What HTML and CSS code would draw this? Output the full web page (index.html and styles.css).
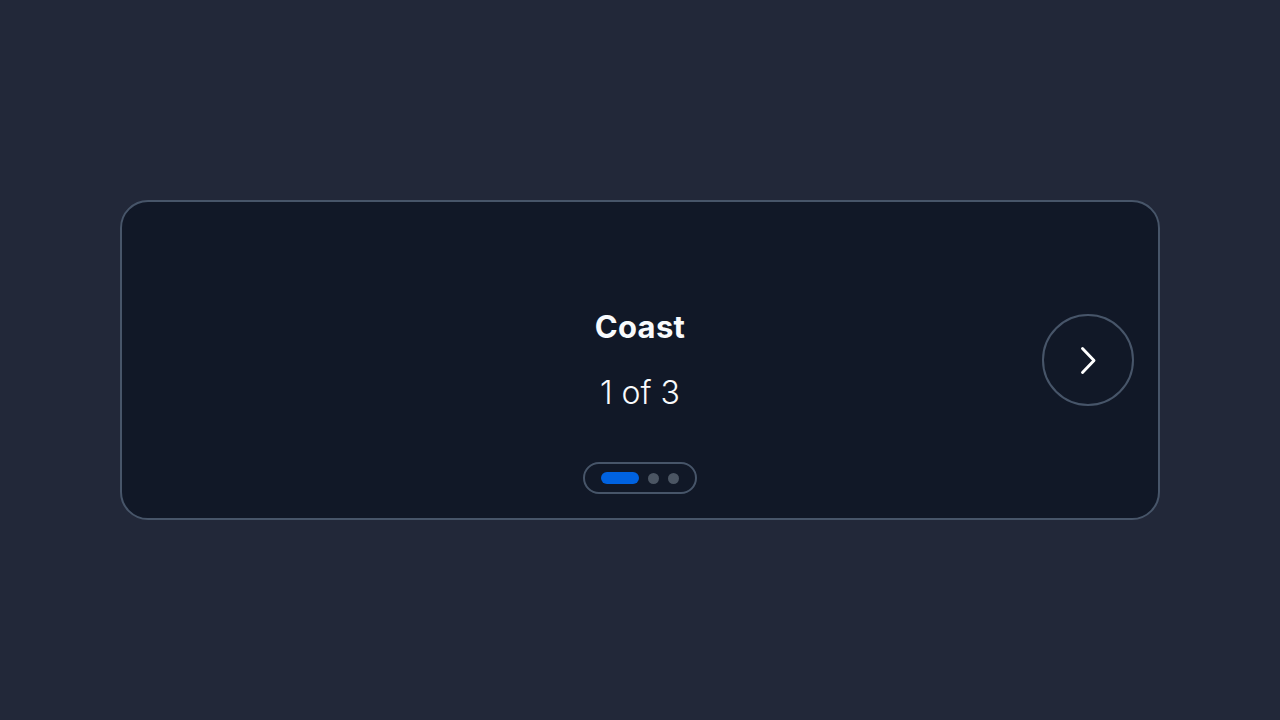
FILE: index.html
```html
<!DOCTYPE html>
<html lang="en">
<head>
<meta charset="utf-8">
<title>Carousel</title>
<link rel="stylesheet" href="styles.css">
</head>
<body>
<main class="stage">
  <section class="card">
    <div class="content">
      <h2 class="title">Coast</h2>
      <p class="count">1 of 3</p>
      <div class="dots">
        <span class="dot active"></span>
        <span class="dot"></span>
        <span class="dot"></span>
      </div>
    </div>
    <button class="next" aria-label="Next">
      <svg width="32" height="32" viewBox="0 0 32 32" fill="none" stroke="#ffffff" stroke-width="2.9" stroke-linecap="round" stroke-linejoin="round"><path d="M10.5 4.5L22 16.5 10.5 28.5"/></svg>
    </button>
  </section>
</main>
</body>
</html>
```
FILE: styles.css
```css
* { box-sizing: border-box; }
html, body { margin: 0; padding: 0; }
body {
  background: #222839;
  font-family: Inter, "Noto Sans", sans-serif;
  color: #f8fafc;
}
.stage {
  width: 1280px;
  height: 720px;
  padding: 200px 120px;
}
.card {
  position: relative;
  height: 320px;
  border: 2px solid #475569;
  border-radius: 28px;
  background: #111827;
}
.content {
  display: flex;
  flex-direction: column;
  align-items: center;
  padding-top: 105px;
}
.title {
  margin: 0;
  font-size: 31px;
  line-height: 40px;
  font-weight: 700;
  letter-spacing: 0.3px;
}
.count {
  margin: 26px 0 0;
  font-size: 32px;
  line-height: 40px;
  font-weight: 300;
}
.dots {
  margin-top: 49px;
  display: flex;
  align-items: center;
  gap: 9px;
  height: 32px;
  padding: 0 16px;
  border: 2px solid #475569;
  border-radius: 16px;
}
.dot {
  width: 11px;
  height: 11px;
  border-radius: 50%;
  background: #4b5563;
}
.dot.active {
  width: 38px;
  height: 12px;
  border-radius: 6px;
  background: #0062e0;
}
.next {
  position: absolute;
  right: 24px;
  top: 50%;
  transform: translateY(-50%);
  width: 92px;
  height: 92px;
  border-radius: 50%;
  border: 2px solid #475569;
  background: transparent;
  display: flex;
  align-items: center;
  justify-content: center;
  padding: 0;
}
```
